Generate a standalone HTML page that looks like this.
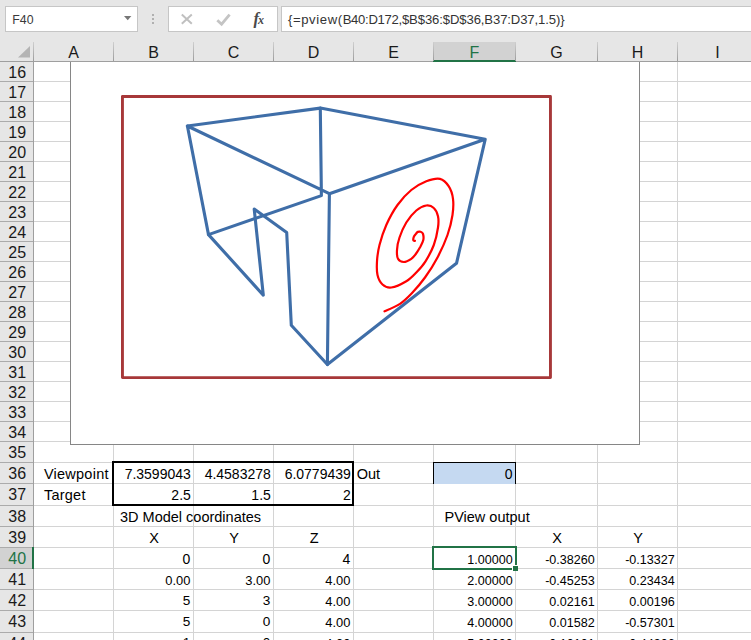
<!DOCTYPE html><html><head><meta charset="utf-8"><title>pview</title><style>
html,body{margin:0;padding:0;overflow:hidden;}
body{width:751px;height:640px;overflow:hidden;position:relative;background:#fff;font-family:"Liberation Sans",Arial,sans-serif;color:#000;}
div{position:absolute;box-sizing:border-box;white-space:nowrap;}
.top{left:0;top:0;width:751px;height:62px;background:#e6e6e6;}
.box{background:#fff;border:1px solid #c6c6c6;}
.hl{left:34px;width:717px;height:1px;background:#d4d4d4;}
.vl{top:62px;width:1px;height:578px;background:#d4d4d4;}
.rh{left:0;width:33px;padding-left:1.5px;padding-top:0.6px;background:#e6e6e6;font-size:16px;text-align:center;line-height:20px;color:#1a1a1a;}
.rl{left:0;width:33px;height:1px;background:#ababab;}
.ch{top:42px;height:19px;font-size:16px;text-align:center;line-height:21px;color:#1a1a1a;}
.cs{top:42px;width:1px;height:19px;background:linear-gradient(#cfcfcf,#9c9c9c);}
.c{font-size:14px;height:20px;line-height:20px;color:#000;}
.r{text-align:right;}
.m{text-align:center;padding-left:1.2px;}
svg{position:absolute;overflow:visible;}

</style></head><body>
<div class="hl" style="top:81px"></div>
<div class="hl" style="top:101px"></div>
<div class="hl" style="top:121px"></div>
<div class="hl" style="top:141px"></div>
<div class="hl" style="top:161px"></div>
<div class="hl" style="top:181px"></div>
<div class="hl" style="top:201px"></div>
<div class="hl" style="top:221px"></div>
<div class="hl" style="top:241px"></div>
<div class="hl" style="top:261px"></div>
<div class="hl" style="top:281px"></div>
<div class="hl" style="top:301px"></div>
<div class="hl" style="top:321px"></div>
<div class="hl" style="top:341px"></div>
<div class="hl" style="top:361px"></div>
<div class="hl" style="top:381px"></div>
<div class="hl" style="top:401px"></div>
<div class="hl" style="top:421px"></div>
<div class="hl" style="top:441px"></div>
<div class="hl" style="top:462px"></div>
<div class="hl" style="top:483px"></div>
<div class="hl" style="top:505px"></div>
<div class="hl" style="top:526px"></div>
<div class="hl" style="top:547px"></div>
<div class="hl" style="top:568px"></div>
<div class="hl" style="top:589px"></div>
<div class="hl" style="top:610px"></div>
<div class="hl" style="top:632px"></div>
<div class="vl" style="left:113px"></div>
<div class="vl" style="left:193px"></div>
<div class="vl" style="left:273px"></div>
<div class="vl" style="left:353px"></div>
<div class="vl" style="left:433px"></div>
<div class="vl" style="left:515px"></div>
<div class="vl" style="left:597px"></div>
<div class="vl" style="left:677px"></div>
<div style="left:0;top:62px;width:33px;height:578px;background:#e6e6e6"></div>
<div class="rh" style="top:62px;height:19px;line-height:20px">16</div>
<div class="rl" style="top:81px"></div>
<div class="rh" style="top:82px;height:19px;line-height:20px">17</div>
<div class="rl" style="top:101px"></div>
<div class="rh" style="top:102px;height:19px;line-height:20px">18</div>
<div class="rl" style="top:121px"></div>
<div class="rh" style="top:122px;height:19px;line-height:20px">19</div>
<div class="rl" style="top:141px"></div>
<div class="rh" style="top:142px;height:19px;line-height:20px">20</div>
<div class="rl" style="top:161px"></div>
<div class="rh" style="top:162px;height:19px;line-height:20px">21</div>
<div class="rl" style="top:181px"></div>
<div class="rh" style="top:182px;height:19px;line-height:20px">22</div>
<div class="rl" style="top:201px"></div>
<div class="rh" style="top:202px;height:19px;line-height:20px">23</div>
<div class="rl" style="top:221px"></div>
<div class="rh" style="top:222px;height:19px;line-height:20px">24</div>
<div class="rl" style="top:241px"></div>
<div class="rh" style="top:242px;height:19px;line-height:20px">25</div>
<div class="rl" style="top:261px"></div>
<div class="rh" style="top:262px;height:19px;line-height:20px">26</div>
<div class="rl" style="top:281px"></div>
<div class="rh" style="top:282px;height:19px;line-height:20px">27</div>
<div class="rl" style="top:301px"></div>
<div class="rh" style="top:302px;height:19px;line-height:20px">28</div>
<div class="rl" style="top:321px"></div>
<div class="rh" style="top:322px;height:19px;line-height:20px">29</div>
<div class="rl" style="top:341px"></div>
<div class="rh" style="top:342px;height:19px;line-height:20px">30</div>
<div class="rl" style="top:361px"></div>
<div class="rh" style="top:362px;height:19px;line-height:20px">31</div>
<div class="rl" style="top:381px"></div>
<div class="rh" style="top:382px;height:19px;line-height:20px">32</div>
<div class="rl" style="top:401px"></div>
<div class="rh" style="top:402px;height:19px;line-height:20px">33</div>
<div class="rl" style="top:421px"></div>
<div class="rh" style="top:422px;height:19px;line-height:20px">34</div>
<div class="rl" style="top:441px"></div>
<div class="rh" style="top:442px;height:20px;line-height:20px">35</div>
<div class="rl" style="top:462px"></div>
<div class="rh" style="top:463px;height:20px;line-height:20px">36</div>
<div class="rl" style="top:483px"></div>
<div class="rh" style="top:484px;height:21px;line-height:20px">37</div>
<div class="rl" style="top:505px"></div>
<div class="rh" style="top:506px;height:20px;line-height:20px">38</div>
<div class="rl" style="top:526px"></div>
<div class="rh" style="top:527px;height:20px;line-height:20px">39</div>
<div class="rl" style="top:547px"></div>
<div class="rh" style="top:548px;height:20px;line-height:20px;background:#d2d2d2;color:#217346">40</div>
<div class="rl" style="top:568px"></div>
<div class="rh" style="top:569px;height:20px;line-height:20px">41</div>
<div class="rl" style="top:589px"></div>
<div class="rh" style="top:590px;height:20px;line-height:20px">42</div>
<div class="rl" style="top:610px"></div>
<div class="rh" style="top:611px;height:21px;line-height:20px">43</div>
<div class="rl" style="top:632px"></div>
<div class="rh" style="top:633px;height:20px;line-height:20px">44</div>
<div style="left:33px;top:62px;width:1px;height:578px;background:#9f9f9f"></div>
<div style="left:32px;top:547px;width:2px;height:22px;background:#217346"></div>
<div style="left:70px;top:55px;width:570px;height:390px;background:#fff;border:1px solid #868686"></div>
<div class="top"></div>
<div style="left:0;top:61px;width:751px;height:1px;background:#9f9f9f"></div>
<div class="ch" style="left:34px;width:79px">A</div>
<div class="ch" style="left:114px;width:79px">B</div>
<div class="ch" style="left:194px;width:79px">C</div>
<div class="ch" style="left:274px;width:79px">D</div>
<div class="ch" style="left:354px;width:79px">E</div>
<div class="ch" style="left:434px;width:81px;background:#d2d2d2;color:#217346;height:18px">F</div>
<div style="left:433px;top:60px;width:83px;height:2px;background:#217346"></div>
<div class="ch" style="left:516px;width:81px">G</div>
<div class="ch" style="left:598px;width:79px">H</div>
<div class="ch" style="left:678px;width:79px">I</div>
<div class="cs" style="left:33px"></div>
<div class="cs" style="left:113px"></div>
<div class="cs" style="left:193px"></div>
<div class="cs" style="left:273px"></div>
<div class="cs" style="left:353px"></div>
<div class="cs" style="left:433px"></div>
<div class="cs" style="left:515px"></div>
<div class="cs" style="left:597px"></div>
<div class="cs" style="left:677px"></div>
<svg style="left:0;top:42px" width="33" height="19"><polygon points="18,15.5 30,4 30,15.5" fill="#b4b4b4"/></svg>
<div class="box" style="left:5px;top:6px;width:133px;height:26px"></div>
<div style="left:12.3px;top:11.2px;font-size:12.3px;line-height:18px;color:#3a3a3a">F40</div>
<svg style="left:124px;top:16px" width="8" height="5"><polygon points="0,0 7.4,0 3.7,4.2" fill="#777"/></svg>
<div style="left:152px;top:14px;width:2px;height:2px;background:#b0b0b0"></div>
<div style="left:152px;top:18px;width:2px;height:2px;background:#b0b0b0"></div>
<div style="left:152px;top:22px;width:2px;height:2px;background:#b0b0b0"></div>
<div class="box" style="left:168px;top:6px;width:110px;height:26px"></div>
<svg style="left:180px;top:12px" width="90" height="16"><path d="M1.8,2.6 L11.8,11.8 M11.8,2.6 L1.8,11.8" stroke="#c0c0c0" stroke-width="2" fill="none"/><path d="M37.3,8.2 L41.6,12.2 L49.6,2.6" stroke="#c4c4c4" stroke-width="2.8" fill="none"/></svg>
<div style="left:253.5px;top:9.5px;font-family:'Liberation Serif',serif;font-style:italic;font-weight:bold;font-size:16.5px;line-height:18px;color:#4a4a4a;letter-spacing:-1px">f<span style="font-size:12px;letter-spacing:0">x</span></div>
<div class="box" style="left:281px;top:6px;width:480px;height:26px"></div>
<div style="left:288px;top:9.7px;font-size:13.1px;line-height:20px;color:#333"><span style="letter-spacing:0.6px">{=pview(</span><span style="letter-spacing:-0.29px">B40:D172,</span><span style="letter-spacing:-0.11px">$B$36:$D$36,B37:D37,1.5)}</span></div>
<svg style="left:0;top:0" width="751" height="640" viewBox="0 0 751 640">
<rect x="122.45" y="96.5" width="428" height="281.1" fill="none" stroke="#a73839" stroke-width="2.9" stroke-linejoin="round"/>
<g fill="none" stroke="#3f6ea8" stroke-width="3.1" stroke-linejoin="round" stroke-linecap="round">
<polyline points="187.4,126 320.3,108.1 485.2,139.3 329.4,193.7 327.4,364.5 456.5,263.3 485.2,139.3"/>
<polyline points="320.3,108.1 321.4,195.6 208.5,234.6 187.4,126 329.4,193.7"/>
<polyline points="208.5,234.6 263.3,295.2 254.2,209 286.7,232.5 291.3,325.3 327.4,364.5"/>
</g>
<path fill="none" stroke="#ff0000" stroke-width="2.2" stroke-linejoin="round" stroke-linecap="round" d="M414.9,240.9 C414.6,240.8 413.5,240.9 413.3,240.2 C413.1,239.5 413.5,237.8 413.9,236.7 C414.3,235.6 415.2,234.7 415.9,233.9 C416.6,233.1 417.1,232.2 417.9,231.9 C418.7,231.6 419.8,231.5 420.6,231.8 C421.5,232.1 422.6,232.5 423.0,233.9 C423.4,235.3 423.8,237.8 423.3,240.0 C422.8,242.2 421.4,244.7 420.2,247.0 C418.9,249.3 417.3,252.0 415.8,254.0 C414.3,256.0 413.3,257.5 411.3,258.8 C409.3,260.1 406.0,262.0 403.8,262.0 C401.6,262.0 399.1,260.8 398.0,258.8 C396.9,256.8 396.8,253.6 397.0,250.0 C397.2,246.4 397.9,242.1 399.5,237.5 C401.1,232.9 403.5,227.0 406.3,222.5 C409.1,218.0 413.0,213.3 416.3,210.5 C419.6,207.7 423.4,205.9 426.3,205.5 C429.2,205.1 431.9,206.2 433.8,208.0 C435.8,209.8 437.3,213.1 438.0,216.3 C438.7,219.6 438.7,222.7 438.0,227.5 C437.3,232.3 435.9,239.4 433.8,245.0 C431.7,250.6 428.4,256.7 425.5,261.3 C422.6,265.9 419.5,269.2 416.3,272.5 C413.1,275.8 410.5,278.8 406.3,281.3 C402.1,283.8 395.3,287.0 391.3,287.5 C387.3,288.0 384.8,286.6 382.5,284.5 C380.2,282.4 378.4,278.9 377.5,275.0 C376.6,271.1 376.7,266.3 377.0,261.3 C377.3,256.3 377.9,251.1 379.5,245.0 C381.1,238.9 383.3,231.7 386.3,225.0 C389.3,218.3 393.3,210.8 397.5,205.0 C401.7,199.2 406.5,193.9 411.3,190.0 C416.1,186.1 421.5,183.2 426.3,181.3 C431.1,179.4 436.2,178.0 440.0,178.8 C443.8,179.6 446.6,183.0 448.8,186.3 C451.0,189.6 452.4,194.0 453.0,198.8 C453.6,203.6 453.4,209.0 452.5,215.0 C451.6,221.0 450.0,227.9 447.5,235.0 C445.0,242.1 441.2,250.4 437.5,257.5 C433.8,264.6 429.2,271.7 425.0,277.5 C420.8,283.3 416.7,288.1 412.5,292.5 C408.3,296.9 404.7,300.7 400.0,303.8 C395.3,306.9 387.1,310.1 384.5,311.3"/>
</svg>

<div style="left:433px;top:462px;width:83px;height:22px;background:#c5d9f1;border:1px solid #000;border-bottom:none"></div>
<div class="c " style="left:34px;top:463.98px;width:79px;font-size:14.5px;letter-spacing:0.25px;padding-left:9.9px;">Viewpoint</div>
<div class="c " style="left:34px;top:484.98px;width:79px;font-size:14.5px;letter-spacing:0.25px;padding-left:9.9px;">Target</div>
<div class="c r" style="left:114px;top:464.15px;width:79px;padding-right:2.2px;">7.3599043</div>
<div class="c r" style="left:194px;top:464.15px;width:79px;padding-right:2.2px;">4.4583278</div>
<div class="c r" style="left:274px;top:464.15px;width:79px;padding-right:2.2px;">6.0779439</div>
<div class="c r" style="left:114px;top:485.15px;width:79px;padding-right:2.2px;">2.5</div>
<div class="c r" style="left:194px;top:485.15px;width:79px;padding-right:2.2px;">1.5</div>
<div class="c r" style="left:274px;top:485.15px;width:79px;padding-right:2.2px;">2</div>
<div class="c " style="left:354px;top:463.98px;width:79px;font-size:14.5px;padding-left:2.7px;">Out</div>
<div class="c r" style="left:434px;top:464.15px;width:81px;padding-right:2.5px;">0</div>
<div class="c " style="left:114px;top:506.98px;width:79px;font-size:14.5px;padding-left:6px;">3D Model coordinates</div>
<div class="c " style="left:434px;top:506.98px;width:81px;font-size:14.5px;padding-left:10.5px;">PView output</div>
<div class="c m" style="left:114px;top:527.98px;width:79px;font-size:14.5px;">X</div>
<div class="c m" style="left:194px;top:527.98px;width:79px;font-size:14.5px;">Y</div>
<div class="c m" style="left:274px;top:527.98px;width:79px;font-size:14.5px;">Z</div>
<div class="c m" style="left:516px;top:527.98px;width:81px;font-size:14.5px;">X</div>
<div class="c m" style="left:598px;top:527.98px;width:79px;font-size:14.5px;">Y</div>
<div class="c r" style="left:114px;top:549.15px;width:79px;padding-right:2.6px;">0</div>
<div class="c r" style="left:194px;top:549.15px;width:79px;padding-right:2.6px;">0</div>
<div class="c r" style="left:274px;top:549.15px;width:79px;padding-right:2.6px;">4</div>
<div class="c r" style="left:434px;top:549.65px;width:81px;font-size:12.55px;padding-right:2.3px;">1.00000</div>
<div class="c r" style="left:516px;top:549.65px;width:81px;font-size:12.55px;padding-right:2.3px;">-0.38260</div>
<div class="c r" style="left:598px;top:549.65px;width:79px;font-size:12.55px;padding-right:2.3px;">-0.13327</div>
<div class="c r" style="left:114px;top:570.53px;width:79px;font-size:12.9px;padding-right:2.6px;">0.00</div>
<div class="c r" style="left:194px;top:570.53px;width:79px;font-size:12.9px;padding-right:2.6px;">3.00</div>
<div class="c r" style="left:274px;top:570.53px;width:79px;font-size:12.9px;padding-right:2.6px;">4.00</div>
<div class="c r" style="left:434px;top:570.65px;width:81px;font-size:12.55px;padding-right:2.3px;">2.00000</div>
<div class="c r" style="left:516px;top:570.65px;width:81px;font-size:12.55px;padding-right:2.3px;">-0.45253</div>
<div class="c r" style="left:598px;top:570.65px;width:79px;font-size:12.55px;padding-right:2.3px;">0.23434</div>
<div class="c r" style="left:114px;top:591.29px;width:79px;font-size:13.6px;padding-right:2.6px;">5</div>
<div class="c r" style="left:194px;top:591.29px;width:79px;font-size:13.6px;padding-right:2.6px;">3</div>
<div class="c r" style="left:274px;top:591.53px;width:79px;font-size:12.9px;padding-right:2.6px;">4.00</div>
<div class="c r" style="left:434px;top:591.65px;width:81px;font-size:12.55px;padding-right:2.3px;">3.00000</div>
<div class="c r" style="left:516px;top:591.65px;width:81px;font-size:12.55px;padding-right:2.3px;">0.02161</div>
<div class="c r" style="left:598px;top:591.65px;width:79px;font-size:12.55px;padding-right:2.3px;">0.00196</div>
<div class="c r" style="left:114px;top:612.29px;width:79px;font-size:13.6px;padding-right:2.6px;">5</div>
<div class="c r" style="left:194px;top:612.29px;width:79px;font-size:13.6px;padding-right:2.6px;">0</div>
<div class="c r" style="left:274px;top:612.53px;width:79px;font-size:12.9px;padding-right:2.6px;">4.00</div>
<div class="c r" style="left:434px;top:612.65px;width:81px;font-size:12.55px;padding-right:2.3px;">4.00000</div>
<div class="c r" style="left:516px;top:612.65px;width:81px;font-size:12.55px;padding-right:2.3px;">0.01582</div>
<div class="c r" style="left:598px;top:612.65px;width:79px;font-size:12.55px;padding-right:2.3px;">-0.57301</div>
<div class="c r" style="left:114px;top:633.29px;width:79px;font-size:13.6px;padding-right:2.6px;">1</div>
<div class="c r" style="left:194px;top:633.29px;width:79px;font-size:13.6px;padding-right:2.6px;">0</div>
<div class="c r" style="left:274px;top:633.53px;width:79px;font-size:12.9px;padding-right:2.6px;">4.00</div>
<div class="c r" style="left:434px;top:633.65px;width:81px;font-size:12.55px;padding-right:2.3px;">5.00000</div>
<div class="c r" style="left:516px;top:633.65px;width:81px;font-size:12.55px;padding-right:2.3px;">-0.10101</div>
<div class="c r" style="left:598px;top:633.65px;width:79px;font-size:12.55px;padding-right:2.3px;">-0.44906</div>
<div style="left:112px;top:461px;width:242px;height:45px;border:2px solid #000"></div>
<div style="left:432px;top:546px;width:85px;height:24px;border:2px solid #217346"></div>
<div style="left:512px;top:565px;width:6px;height:6px;background:#217346;border:1px solid #fff;border-right:none;border-bottom:none"></div>
</body></html>
